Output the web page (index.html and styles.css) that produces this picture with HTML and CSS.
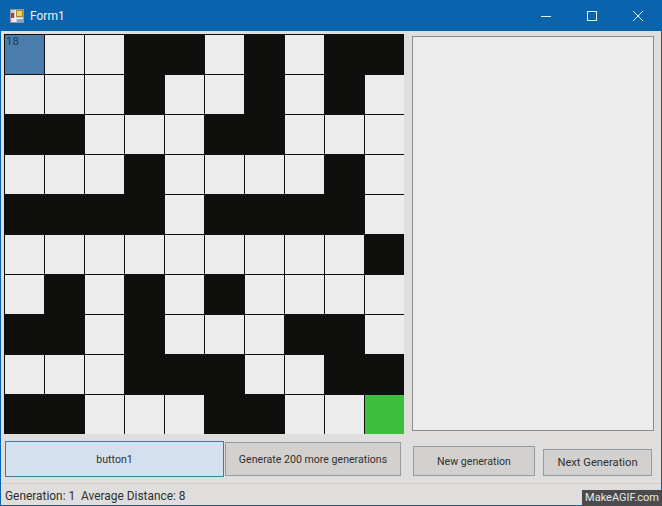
FILE: index.html
```html
<!DOCTYPE html>
<html lang="en">
<head>
<meta charset="utf-8">
<title>Form1</title>
<link rel="stylesheet" href="styles.css">
</head>
<body>
<div class="window">
  <header class="titlebar">
    <svg class="app-icon" width="14" height="14" viewBox="0 0 14 14">
      <rect x="0.5" y="0.5" width="13" height="13" fill="#c9d3dc" stroke="#8d97a2"/>
      <path d="M5.5 1v12M1 9.5h12" stroke="#eef2f5" fill="none"/>
      <rect x="1" y="4" width="3" height="5" fill="#a8402f"/>
      <rect x="2" y="10" width="3" height="3" fill="#e4e8ec"/>
      <rect x="7" y="10" width="6" height="3" fill="#86a5c8"/>
      <rect x="6.5" y="1.5" width="6" height="6" fill="#f0cf60" stroke="#a98a34"/>
    </svg>
    <span class="title">Form1</span>
    <div class="caption">
      <svg class="caption-btn" width="46" height="14" viewBox="0 0 46 14"><path d="M18 7.5h10" stroke="#e8f1f8" fill="none"/></svg>
      <svg class="caption-btn" width="46" height="14" viewBox="0 0 46 14"><rect x="18.5" y="2.5" width="9" height="9" stroke="#e8f1f8" fill="none"/></svg>
      <svg class="caption-btn" width="46" height="14" viewBox="0 0 46 14"><path d="M18 2l10 10M28 2L18 12" stroke="#e8f1f8" fill="none"/></svg>
    </div>
  </header>
  <main class="client">
    <div class="top">
      <div class="grid">
        <div class="cell start">18</div><div class="cell"></div><div class="cell"></div><div class="cell wall"></div><div class="cell wall"></div><div class="cell"></div><div class="cell wall"></div><div class="cell"></div><div class="cell wall"></div><div class="cell wall"></div>
        <div class="cell"></div><div class="cell"></div><div class="cell"></div><div class="cell wall"></div><div class="cell"></div><div class="cell"></div><div class="cell wall"></div><div class="cell"></div><div class="cell wall"></div><div class="cell"></div>
        <div class="cell wall"></div><div class="cell wall"></div><div class="cell"></div><div class="cell"></div><div class="cell"></div><div class="cell wall"></div><div class="cell wall"></div><div class="cell"></div><div class="cell"></div><div class="cell"></div>
        <div class="cell"></div><div class="cell"></div><div class="cell"></div><div class="cell wall"></div><div class="cell"></div><div class="cell"></div><div class="cell"></div><div class="cell"></div><div class="cell wall"></div><div class="cell"></div>
        <div class="cell wall"></div><div class="cell wall"></div><div class="cell wall"></div><div class="cell wall"></div><div class="cell"></div><div class="cell wall"></div><div class="cell wall"></div><div class="cell wall"></div><div class="cell wall"></div><div class="cell"></div>
        <div class="cell"></div><div class="cell"></div><div class="cell"></div><div class="cell"></div><div class="cell"></div><div class="cell"></div><div class="cell"></div><div class="cell"></div><div class="cell"></div><div class="cell wall"></div>
        <div class="cell"></div><div class="cell wall"></div><div class="cell"></div><div class="cell wall"></div><div class="cell"></div><div class="cell wall"></div><div class="cell"></div><div class="cell"></div><div class="cell"></div><div class="cell"></div>
        <div class="cell wall"></div><div class="cell wall"></div><div class="cell"></div><div class="cell wall"></div><div class="cell"></div><div class="cell"></div><div class="cell"></div><div class="cell wall"></div><div class="cell wall"></div><div class="cell"></div>
        <div class="cell"></div><div class="cell"></div><div class="cell"></div><div class="cell wall"></div><div class="cell wall"></div><div class="cell wall"></div><div class="cell"></div><div class="cell"></div><div class="cell wall"></div><div class="cell wall"></div>
        <div class="cell wall"></div><div class="cell wall"></div><div class="cell"></div><div class="cell"></div><div class="cell"></div><div class="cell wall"></div><div class="cell wall"></div><div class="cell"></div><div class="cell"></div><div class="cell goal"></div>
      </div>
      <div class="panel"></div>
    </div>
    <div class="controls">
      <button class="btn btn-focus">button1</button>
      <button class="btn btn-generate">Generate 200 more generations</button>
      <button class="btn btn-new">New generation</button>
      <button class="btn btn-next">Next Generation</button>
    </div>
    <footer class="status">Generation: 1&nbsp;&nbsp;Average Distance: 8</footer>
  </main>
  <div class="watermark">MakeAGIF.com</div>
</div>
</body>
</html>
```

FILE: styles.css
```css
* { box-sizing: border-box; }
html, body { margin: 0; padding: 0; }
body { width: 662px; height: 506px; overflow: hidden; font-family: Roboto, "Noto Sans", sans-serif; font-size: 11.9px; color: #303030; }
.window { position: relative; width: 662px; height: 506px; display: flex; flex-direction: column; background: #0a63ad; }
.titlebar { height: 31px; flex: none; display: flex; align-items: center; padding-left: 10px; color: #e8f1f8; }
.app-icon { flex: none; }
.title { margin-left: 6px; font-size: 12px; }
.caption { margin-left: auto; display: flex; padding-right: 1px; }
.caption-btn { display: block; }
.client { flex: 1; margin: 0 1px 1px 1px; background: #dfdedc; display: flex; flex-direction: column; min-height: 0; }
.top { display: flex; padding: 3px 0 0 3px; align-items: flex-start; }
.grid { width: 400px; height: 400px; flex: none; display: grid; grid-template-columns: repeat(10, 40px); grid-template-rows: repeat(10, 40px); }
.cell { background: #ececec; border-left: 1px solid #0f0f0e; border-top: 1px solid #0f0f0e; }
.wall { background: #0f0f0e; }
.start { background: #4a7dab; font-size: 11.5px; line-height: 12px; padding-left: 1px; color: #24394f; }
.goal { background: #3bbf3d; }
.panel { width: 242px; height: 395px; margin: 2px 0 0 8px; flex: none; background: #ececec; border: 1px solid #8b8b8b; }
.controls { height: 43px; margin-top: 7px; display: flex; align-items: flex-end; padding: 0 0 1px 4px; }
.btn { font: inherit; font-size: 10.6px; color: #303030; padding: 0; background: #d2d1cf; border: 1px solid #9a9a9a; flex: none; white-space: nowrap; }
.btn-focus { width: 219px; height: 36px; background: #d3e1ee; border-color: #3a7ca5; margin-bottom: -1px; }
.btn-generate { width: 176px; height: 34px; margin-left: 1px; }
.btn-new { width: 122px; height: 30px; margin-left: 12px; }
.btn-next { width: 109px; height: 27px; margin-left: 8px; font-size: 11.2px; }
.status { flex: 1; margin-top: 6px; border-top: 1px solid #cfcecc; padding: 3px 0 0 4px; line-height: 18px; }
.watermark { position: absolute; right: 0; bottom: 0; width: 80px; height: 16px; background: #4b4a4c; color: #e9e9e9; font-size: 11px; line-height: 16px; text-align: center; white-space: nowrap; }
```
